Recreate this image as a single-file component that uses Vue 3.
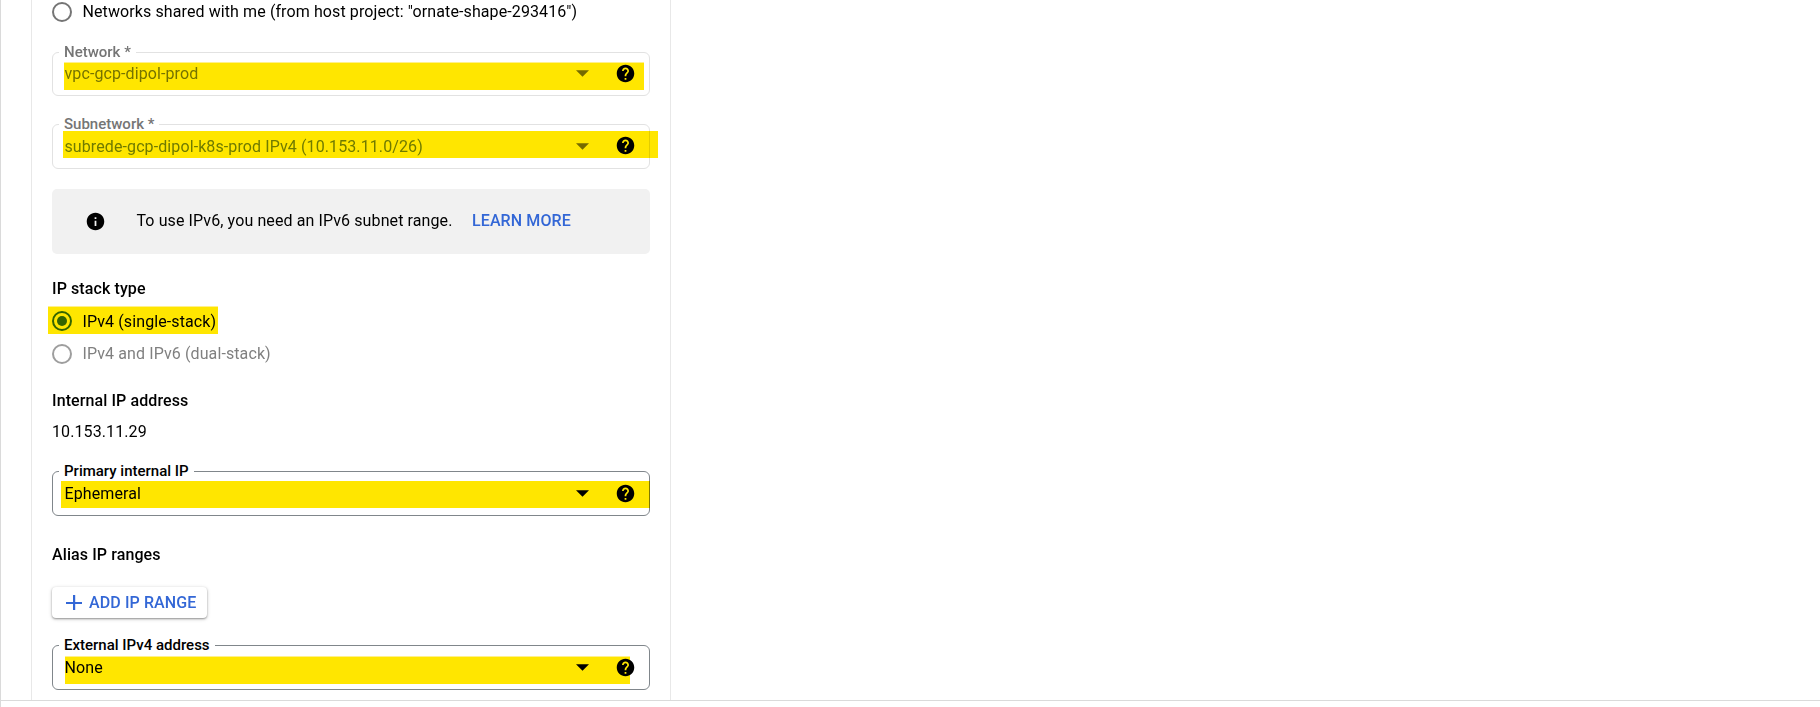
<script setup>
const HELP = 'M12 2C6.48 2 2 6.48 2 12s4.48 10 10 10 10-4.48 10-10S17.52 2 12 2zm1 17h-2v-2h2v2zm2.07-7.75l-.9.92C13.45 12.9 13 13.5 13 15h-2v-.5c0-1.1.45-2.1 1.17-2.83l1.24-1.26c.37-.36.59-.86.59-1.41 0-1.1-.9-2-2-2s-2 .9-2 2H8c0-2.21 1.79-4 4-4s4 1.79 4 4c0 .88-.36 1.68-.93 2.25z'
const INFO = 'M12 2C6.48 2 2 6.48 2 12s4.48 10 10 10 10-4.48 10-10S17.52 2 12 2zm1 15h-2v-6h2v6zm0-8h-2V7h2v2z'
</script>

<template>
  <div class="page">
    <main class="panel">
      <div class="radio first">
        <span class="ring"></span>
        <span>Networks shared with me (from host project: "ornate-shape-293416")</span>
      </div>

      <div class="field network disabled">
        <span class="label">Network *</span>
        <span class="value">vpc-gcp-dipol-prod</span>
        <svg class="arrow" viewBox="0 0 14 7"><path d="M0 0h14L7 7z" /></svg>
        <svg class="help" viewBox="0 0 24 24"><path :d="HELP" /></svg>
        <i class="mark mark-network"></i>
      </div>

      <div class="field subnetwork disabled">
        <span class="label">Subnetwork *</span>
        <span class="value">subrede-gcp-dipol-k8s-prod IPv4 (10.153.11.0/26)</span>
        <svg class="arrow" viewBox="0 0 14 7"><path d="M0 0h14L7 7z" /></svg>
        <svg class="help" viewBox="0 0 24 24"><path :d="HELP" /></svg>
        <i class="mark mark-subnetwork"></i>
      </div>

      <div class="notice">
        <svg class="info" viewBox="0 0 24 24"><path :d="INFO" /></svg>
        <span>To use IPv6, you need an IPv6 subnet range.</span>
        <a class="learn">LEARN MORE</a>
      </div>

      <h3 class="stack-title">IP stack type</h3>
      <div class="radio single">
        <span class="ring on"></span>
        <span>IPv4 (single-stack)</span>
        <i class="mark mark-single"></i>
      </div>
      <div class="radio dual">
        <span class="ring"></span>
        <span>IPv4 and IPv6 (dual-stack)</span>
      </div>

      <h3 class="internal-title">Internal IP address</h3>
      <p class="address">10.153.11.29</p>

      <div class="field primary">
        <span class="label">Primary internal IP</span>
        <span class="value">Ephemeral</span>
        <svg class="arrow" viewBox="0 0 14 7"><path d="M0 0h14L7 7z" /></svg>
        <svg class="help" viewBox="0 0 24 24"><path :d="HELP" /></svg>
        <i class="mark mark-primary"></i>
      </div>

      <h3 class="alias-title">Alias IP ranges</h3>
      <button class="add">
        <svg viewBox="0 0 16 16"><path d="M7 0h2.200v6.900H16v2.200H9.200V15H7V9.100H0V6.900h7z" /></svg>
        <span>ADD IP RANGE</span>
      </button>

      <div class="field external">
        <span class="label">External IPv4 address</span>
        <span class="value">None</span>
        <svg class="arrow" viewBox="0 0 14 7"><path d="M0 0h14L7 7z" /></svg>
        <svg class="help" viewBox="0 0 24 24"><path :d="HELP" /></svg>
        <i class="mark mark-external"></i>
      </div>
    </main>
    <footer class="footer"></footer>
  </div>
</template>

<style>
body {
  background: #fff;
}
</style>

<style scoped>
.page {
  box-sizing: border-box;
  height: 707px;
  overflow: hidden;
  border-left: 1px solid #dadada;
  background: #fff;
  color: #000;
  font: 400 16px/23px Roboto, sans-serif;
  letter-spacing: 0.1px;
}
.panel {
  display: flow-root;
  box-sizing: border-box;
  width: 640px;
  height: 700px;
  margin-left: 30px;
  padding: 0 20px;
  border: solid #e8e8e8;
  border-width: 0 1px;
}
.footer {
  height: 6px;
  border-top: 1px solid #dadada;
}
.radio {
  position: relative;
  display: flex;
  gap: 10.5px;
  height: 23px;
  white-space: nowrap;
}
.ring {
  display: flex;
  align-items: center;
  justify-content: center;
  box-sizing: border-box;
  width: 20px;
  height: 20px;
  margin-top: 2px;
  border: 2px solid #757575;
  border-radius: 50%;
}
.ring.on {
  margin-top: 1px;
  border-color: #347000;
}
.ring.on::after {
  content: '';
  width: 10px;
  height: 10px;
  border-radius: 50%;
  background: #347000;
}
.dual {
  margin-top: 9px;
  color: #808080;
}
.dual .ring {
  border-color: #9e9e9e;
}
.field {
  position: relative;
  display: flex;
  align-items: flex-start;
  box-sizing: border-box;
  width: 598px;
  height: 45px;
  padding: 10px 13.5px 0 11.5px;
  border: 1px solid #80868b;
  border-radius: 6px;
}
.disabled {
  border-color: #e2e2e2;
  color: #757575;
}
.label {
  position: absolute;
  top: -10px;
  left: 6px;
  padding: 0 5px;
  background: #fff;
  font-size: 15px;
  font-weight: 500;
  line-height: 18px;
  letter-spacing: 0;
  white-space: nowrap;
}
.value {
  flex: 1;
  white-space: nowrap;
}
.disabled .value {
  color: #757f75;
}
.subnetwork .value {
  color: #70887a;
}
.arrow {
  width: 13px;
  height: 7px;
  margin: 8px 25.5px 0 0;
  fill: currentColor;
}
.help {
  width: 21px;
  height: 21px;
  margin-top: 1px;
  fill: #000;
}
.network {
  height: 44px;
  margin-top: 29px;
  padding-top: 9px;
}
.subnetwork {
  margin-top: 28px;
}
.subnetwork .help {
  margin-top: 0;
}
.mark {
  position: absolute;
  box-sizing: border-box;
  height: 27px;
  background: #ffe600;
  mix-blend-mode: multiply;
}
.mark-network {
  top: 9px;
  left: 11px;
  width: 580px;
  height: 28px;
  border-top: 1px solid #fff08c;
}
.mark-subnetwork {
  top: 6px;
  left: 10px;
  width: 595px;
}
.mark-single {
  top: -4px;
  left: -4px;
  width: 170px;
  height: 28px;
  border-top: 1px solid #fff08c;
}
.mark-primary {
  top: 9px;
  left: 8px;
  width: 589px;
}
.mark-external {
  top: 10px;
  left: 12px;
  width: 565px;
  height: 28px;
  border-top: 1px solid #fff08c;
}
.notice {
  display: flex;
  align-items: center;
  box-sizing: border-box;
  height: 65px;
  margin-top: 20px;
  padding: 0 0 2px 32.5px;
  border-radius: 5px;
  background: #f1f1f1;
  white-space: nowrap;
}
.info {
  width: 21px;
  height: 21px;
  margin: 1px 31px 0 0;
}
.learn {
  margin-left: 19.5px;
  color: #3367d6;
  font-weight: 500;
}
h3 {
  margin: 0;
  font-size: 16px;
  font-weight: 500;
}
.stack-title {
  margin-top: 23px;
}
.single {
  margin-top: 10px;
}
.internal-title {
  margin-top: 24px;
}
.address {
  margin: 8px 0 0;
}
.primary {
  margin-top: 28px;
}
.alias-title {
  margin-top: 27px;
}
.add {
  display: flex;
  align-items: center;
  box-sizing: border-box;
  width: 155px;
  height: 31px;
  margin-top: 21px;
  padding: 0 0 0 13.5px;
  border: 0;
  border-radius: 4px;
  background: #fff;
  box-shadow: 0 1px 2px rgba(0, 0, 0, 0.35), 0 1px 4px rgba(0, 0, 0, 0.16);
  color: #3367d6;
  font: inherit;
  font-weight: 500;
  letter-spacing: 0.1px;
  white-space: nowrap;
}
.add svg {
  width: 16px;
  height: 16px;
  margin-right: 7.5px;
  fill: currentColor;
}
.external {
  margin-top: 27px;
}
</style>
